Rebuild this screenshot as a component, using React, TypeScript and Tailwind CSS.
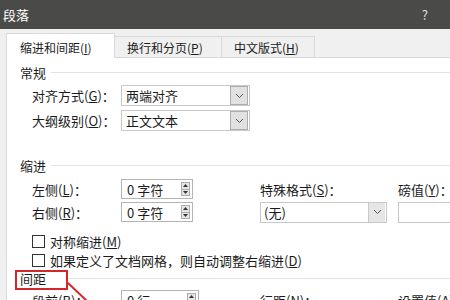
import React from "react";

const K = ({ k }: { k: string }) => (
  <span>
    (<span className="underline underline-offset-[1px]">{k}</span>)
  </span>
);

const Chevron = () => (
  <svg width="9" height="6" viewBox="0 0 9 6">
    <path d="M1 1 L4.5 4.5 L8 1" fill="none" stroke="#555" strokeWidth="1" />
  </svg>
);

const Spin = () => (
  <div className="flex flex-col w-[9px] h-[14px] border border-[#adadad] bg-[#e6e6e6]">
    <div className="flex-1 flex items-center justify-center border-b border-[#adadad]">
      <svg width="5" height="3" viewBox="0 0 5 3">
        <path d="M0 3 L2.5 0 L5 3 Z" fill="#333" />
      </svg>
    </div>
    <div className="flex-1 flex items-center justify-center">
      <svg width="5" height="3" viewBox="0 0 5 3">
        <path d="M0 0 L2.5 3 L5 0 Z" fill="#333" />
      </svg>
    </div>
  </div>
);

const Spinner = ({ text, w = 72 }: { text: string; w?: number }) => (
  <div
    className="h-[20px] border border-[#b4b4b4] bg-white flex items-center justify-between pl-[5px] pr-[2px] shrink-0"
    style={{ width: w }}
  >
    <span className="whitespace-pre">{text}</span>
    <Spin />
  </div>
);

const Select = ({ text, w }: { text: string; w: number }) => (
  <div
    className="h-[21px] border border-[#c8c8c8] bg-white flex items-center justify-between pl-[4px] pr-[1px] shrink-0"
    style={{ width: w }}
  >
    <span>{text}</span>
    <div className="w-[18px] h-[19px] border border-[#adadad] bg-[#e1e1e1] flex items-center justify-center">
      <Chevron />
    </div>
  </div>
);

const Header = ({ text, boxed }: { text: string; boxed?: boolean }) => (
  <div className="flex items-center h-[16px] relative">
    <span className="relative">
      {text}
      {boxed && (
        <span className="absolute left-[-5px] top-[-2px] w-[53px] h-[20px] border-2 border-[#d4272b]" />
      )}
    </span>
    <div className={`flex-1 h-px bg-[#e3e3e3] ${boxed ? "ml-[22px]" : "ml-[5px]"}`} />
  </div>
);

const Check = ({ children }: { children: React.ReactNode }) => (
  <div className="flex items-center h-[16px] pl-[12px]">
    <div className="w-[13px] h-[13px] border border-[#333] bg-white" />
    <span className="ml-[5px]">{children}</span>
  </div>
);

export default function App() {
  return (
    <div className="w-[450px] h-[300px] overflow-hidden whitespace-nowrap bg-[#f0f0f0] text-[13px] leading-none text-[#1b1b1b] font-['Noto_Sans_CJK_SC','Noto_Sans',sans-serif] relative">
      <div className="h-[29px] bg-[#4a4a48] flex items-center justify-between pl-[3px] pr-[22px] text-white">
        <span>段落</span>
        <span className="text-[#e0e0e0]">?</span>
      </div>
      <div className="h-[28px] flex items-end pl-[6px] text-[12px]">
        <div className="h-[25px] w-[109px] bg-white border border-b-0 border-[#d9d9d9] pl-[13px] pt-[8px] relative top-px z-10">
          缩进和间距<K k="I" />
        </div>
        <div className="h-[21px] w-[107px] bg-[#f0f0f0] border border-l-0 border-b-0 border-[#d9d9d9] pl-[12px] pt-[5px]">
          换行和分页<K k="P" />
        </div>
        <div className="h-[21px] w-[93px] bg-[#f0f0f0] border border-l-0 border-b-0 border-[#d9d9d9] pl-[12px] pt-[5px]">
          中文版式<K k="H" />
        </div>
      </div>
      <div className="ml-[6px] w-[470px] h-[260px] bg-white border border-[#d9d9d9] pl-[13px] pt-[6px]">
        <Header text="常规" />
        <div className="mt-[5px] flex items-center pl-[12px]">
          <span className="w-[89px] shrink-0">
            对齐方式<K k="G" />：
          </span>
          <Select text="两端对齐" w={129} />
        </div>
        <div className="mt-[4px] flex items-center pl-[12px]">
          <span className="w-[89px] shrink-0">
            大纲级别<K k="O" />：
          </span>
          <Select text="正文文本" w={129} />
        </div>
        <div className="mt-[26px]">
          <Header text="缩进" />
        </div>
        <div className="mt-[6px] flex items-center pl-[12px] h-[20px]">
          <span className="w-[89px] shrink-0">
            左侧<K k="L" />：
          </span>
          <Spinner text="0 字符" />
          <span className="ml-[67px] w-[138px] shrink-0">
            特殊格式<K k="S" />：
          </span>
          <span className="shrink-0">
            磅值<K k="Y" />：
          </span>
        </div>
        <div className="mt-[3px] flex items-center pl-[12px] h-[20px]">
          <span className="w-[89px] shrink-0">
            右侧<K k="R" />：
          </span>
          <Spinner text="0 字符" />
          <div className="ml-[67px] w-[138px] shrink-0">
            <div className="w-[127px] h-[21px] border border-[#c8c8c8] bg-white flex items-center justify-between pl-[3px] pr-[1px]">
              <span>(无)</span>
              <div className="w-[17px] h-[19px] border-l border-[#c8c8c8] bg-[#e6e6e6] flex items-center justify-center">
                <Chevron />
              </div>
            </div>
          </div>
          <div className="w-[80px] h-[21px] border border-[#c8c8c8] bg-white shrink-0" />
        </div>
        <div className="mt-[11px]">
          <Check>
            对称缩进<K k="M" />
          </Check>
        </div>
        <div className="mt-[3px]">
          <Check>
            如果定义了文档网格，则自动调整右缩进<K k="D" />
          </Check>
        </div>
        <div className="mt-[2px]">
          <Header text="间距" boxed />
        </div>
        <div className="mt-[4px] flex items-center pl-[12px] h-[20px]">
          <span className="w-[89px] shrink-0">
            段前<K k="B" />：
          </span>
          <Spinner text="0 行" w={78} />
          <span className="ml-[61px] w-[138px] shrink-0">
            行距<K k="N" />：
          </span>
          <span className="shrink-0">
            设置值<K k="A" />：
          </span>
        </div>
      </div>
      <svg className="absolute left-0 top-0" width="450" height="300">
        <line x1="68" y1="283" x2="88" y2="302" stroke="#d4272b" strokeWidth="2" />
      </svg>
    </div>
  );
}
